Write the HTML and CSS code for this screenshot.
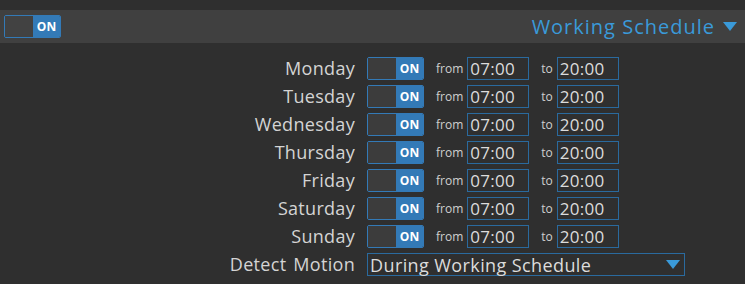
FILE: index.html
```html
<!DOCTYPE html>
<html lang="en">
<head>
  <meta charset="UTF-8">
  <title>Working Schedule</title>
  <link rel="stylesheet" href="styles.css">
</head>
<body>

  <div class="panel-header">
    <div class="toggle"><span class="toggle-off"></span><span class="toggle-on">ON</span></div>
    <div class="panel-title">Working Schedule <span class="caret"></span></div>
  </div>

  <div class="schedule">
    <label class="day">Monday</label>
    <div class="controls">
      <div class="toggle"><span class="toggle-off"></span><span class="toggle-on">ON</span></div>
      <span class="small">from</span><input class="time" value="07:00">
      <span class="small">to</span><input class="time" value="20:00">
    </div>

    <label class="day">Tuesday</label>
    <div class="controls">
      <div class="toggle"><span class="toggle-off"></span><span class="toggle-on">ON</span></div>
      <span class="small">from</span><input class="time" value="07:00">
      <span class="small">to</span><input class="time" value="20:00">
    </div>

    <label class="day">Wednesday</label>
    <div class="controls">
      <div class="toggle"><span class="toggle-off"></span><span class="toggle-on">ON</span></div>
      <span class="small">from</span><input class="time" value="07:00">
      <span class="small">to</span><input class="time" value="20:00">
    </div>

    <label class="day">Thursday</label>
    <div class="controls">
      <div class="toggle"><span class="toggle-off"></span><span class="toggle-on">ON</span></div>
      <span class="small">from</span><input class="time" value="07:00">
      <span class="small">to</span><input class="time" value="20:00">
    </div>

    <label class="day">Friday</label>
    <div class="controls">
      <div class="toggle"><span class="toggle-off"></span><span class="toggle-on">ON</span></div>
      <span class="small">from</span><input class="time" value="07:00">
      <span class="small">to</span><input class="time" value="20:00">
    </div>

    <label class="day">Saturday</label>
    <div class="controls">
      <div class="toggle"><span class="toggle-off"></span><span class="toggle-on">ON</span></div>
      <span class="small">from</span><input class="time" value="07:00">
      <span class="small">to</span><input class="time" value="20:00">
    </div>

    <label class="day">Sunday</label>
    <div class="controls">
      <div class="toggle"><span class="toggle-off"></span><span class="toggle-on">ON</span></div>
      <span class="small">from</span><input class="time" value="07:00">
      <span class="small">to</span><input class="time" value="20:00">
    </div>

    <label class="day">Detect Motion</label>
    <div class="controls">
      <div class="select">During Working Schedule <span class="caret"></span></div>
    </div>
  </div>

</body>
</html>
```

FILE: styles.css
```css
/* page */
body {
  margin: 0;
  padding-top: 10px;
  background-color: #2f2f2f;
  font-family: "Open Sans", "DejaVu Sans", sans-serif;
  color: #d0d0d0;
}

/* header bar */
.panel-header {
  display: flex;
  justify-content: space-between;
  align-items: center;
  height: 33px;
  padding: 0 8px 0 4px;
  background-color: #404040;
}

.panel-title {
  display: flex;
  align-items: center;
  gap: 8px;
  font-size: 20px;
  letter-spacing: 1px;
  color: #3a9ad9;
}

.caret {
  width: 0;
  height: 0;
  border-left: 7px solid transparent;
  border-right: 7px solid transparent;
  border-top: 9px solid #3a9ad9;
}

/* on/off switch */
.toggle {
  display: flex;
  width: 57px;
  height: 23px;
  box-sizing: border-box;
  border: 1px solid #337ab7;
  border-radius: 2px;
  overflow: hidden;
}

.toggle-off {
  width: 28px;
  background-color: #3c3c3c;
}

.panel-header .toggle-off {
  background-color: #424242;
}

.toggle-on {
  flex: 1;
  display: flex;
  align-items: center;
  justify-content: center;
  background-color: #337ab7;
  color: #fff;
  font-size: 12px;
  font-weight: bold;
}

/* schedule form */
.schedule {
  display: grid;
  grid-template-columns: 355px auto;
  column-gap: 12px;
  row-gap: 5px;
  padding-top: 14px;
}

.day {
  text-align: right;
  font-size: 18px;
  letter-spacing: 0.3px;
  word-spacing: 2px;
  line-height: 23px;
  color: #d4d4d4;
}

.controls {
  display: flex;
  align-items: center;
}

.small {
  font-size: 12px;
  margin: 0 4px 0 12px;
}

.time {
  width: 62px;
  height: 23px;
  box-sizing: border-box;
  padding: 0 2px;
  border: 1px solid #2a6a9e;
  background: transparent;
  color: #dcdcdc;
  font-family: inherit;
  font-size: 17px;
  letter-spacing: 0.3px;
}

.select {
  display: flex;
  justify-content: space-between;
  align-items: center;
  width: 318px;
  height: 23px;
  box-sizing: border-box;
  padding: 0 4px 0 2px;
  border: 1px solid #2a6a9e;
  font-size: 18px;
  letter-spacing: 0.4px;
  color: #dcdcdc;
}
```
